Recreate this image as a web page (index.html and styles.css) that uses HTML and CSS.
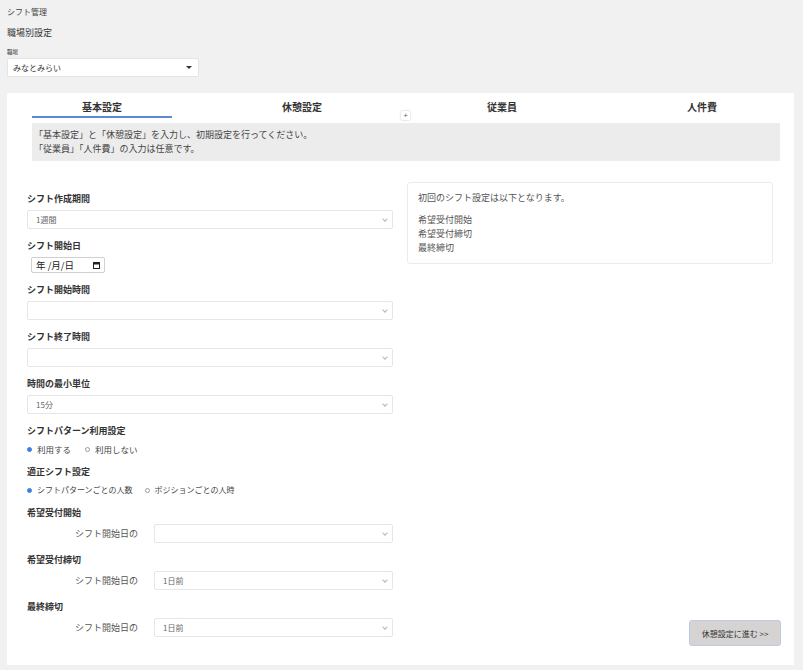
FILE: index.html
```html
<!DOCTYPE html>
<html lang="ja">
<head>
    <meta charset="UTF-8">
    <meta name="viewport" content="width=device-width, initial-scale=1.0">
    <title>職場別設定</title>
    <link rel="stylesheet" href="styles.css">
</head>
<body>

    <div id="pageHead">
        <div class="crumb">シフト管理</div>
        <h1 class="pageTitle">職場別設定</h1>
        <div class="siteLabel">職場</div>
        <div class="siteSelect">みなとみらい</div>
    </div>

    <div id="settingsCard">
        <div class="tabs">
            <div class="tab active">基本設定</div>
            <div class="tab">休憩設定</div>
            <div class="tab">従業員</div>
            <div class="tab">人件費</div>
        </div>
        <button class="tabAdd">+</button>

        <div class="notice">
            「基本設定」と「休憩設定」を入力し、初期設定を行ってください。<br>
            「従業員」「人件費」の入力は任意です。
        </div>

        <div class="content">
            <div class="settings">
                <div class="group">
                    <div class="groupLabel">シフト作成期間</div>
                    <div class="select">1週間</div>
                </div>

                <div class="group">
                    <div class="groupLabel">シフト開始日</div>
                    <div class="dateInput">
                        <span>年 /月/日</span>
                        <svg width="7" height="7" viewBox="0 0 7 7"><rect x="0.5" y="0.5" width="6" height="6" fill="none" stroke="#222"/><rect x="0.5" y="0.5" width="6" height="2" fill="#222"/></svg>
                    </div>
                </div>

                <div class="group">
                    <div class="groupLabel">シフト開始時間</div>
                    <div class="select"></div>
                </div>

                <div class="group">
                    <div class="groupLabel">シフト終了時間</div>
                    <div class="select"></div>
                </div>

                <div class="group">
                    <div class="groupLabel">時間の最小単位</div>
                    <div class="select">15分</div>
                </div>

                <div class="group radioGroup">
                    <div class="groupLabel">シフトパターン利用設定</div>
                    <div class="radios">
                        <label class="radio"><span class="dot on"></span>利用する</label>
                        <label class="radio"><span class="dot"></span>利用しない</label>
                    </div>
                </div>

                <div class="group radioGroup">
                    <div class="groupLabel">適正シフト設定</div>
                    <div class="radios narrow">
                        <label class="radio"><span class="dot on"></span>シフトパターンごとの人数</label>
                        <label class="radio"><span class="dot"></span>ポジションごとの人時</label>
                    </div>
                </div>

                <div class="group">
                    <div class="groupLabel">希望受付開始</div>
                    <div class="deadlineRow">
                        <span class="rowLabel">シフト開始日の</span>
                        <div class="select"></div>
                    </div>
                </div>

                <div class="group">
                    <div class="groupLabel">希望受付締切</div>
                    <div class="deadlineRow">
                        <span class="rowLabel">シフト開始日の</span>
                        <div class="select">1日前</div>
                    </div>
                </div>

                <div class="group">
                    <div class="groupLabel">最終締切</div>
                    <div class="deadlineRow">
                        <span class="rowLabel">シフト開始日の</span>
                        <div class="select">1日前</div>
                    </div>
                </div>
            </div>

            <div class="summaryCol">
                <div class="summary">
                    <p>初回のシフト設定は以下となります。</p>
                    希望受付開始<br>
                    希望受付締切<br>
                    最終締切
                </div>
                <button class="nextButton">休憩設定に進む &gt;&gt;</button>
            </div>
        </div>
    </div>

</body>
</html>
```

FILE: styles.css
```css
body {
    margin: 0;
    padding: 5px 9px 6px 7px;
    background-color: #f1f1f1;
    font-family: "Noto Sans CJK JP", "Noto Sans", sans-serif;
    color: #333;
}

.crumb {
    font-size: 8px;
    line-height: 14px;
    color: #444;
}

.pageTitle {
    margin: 7px 0 0;
    font-size: 9px;
    font-weight: normal;
    line-height: 14px;
}

.siteLabel {
    margin-top: 8px;
    font-size: 5.5px;
    line-height: 8px;
}

.siteSelect {
    position: relative;
    margin-top: 2px;
    width: 192px;
    height: 19px;
    box-sizing: border-box;
    padding-left: 5px;
    background-color: #fff;
    border: 1px solid #e4e4e4;
    border-radius: 2px;
    font-size: 8px;
    line-height: 17px;
}

.siteSelect::after {
    content: "";
    position: absolute;
    right: 6px;
    top: 7px;
    border-left: 3px solid transparent;
    border-right: 3px solid transparent;
    border-top: 3px solid #333;
}

#settingsCard {
    position: relative;
    margin-top: 16px;
    background-color: #fff;
}

.tabs {
    display: grid;
    grid-template-columns: repeat(4, 140px);
    column-gap: 60px;
    padding-left: 25px;
}

.tab {
    padding: 7px 0 2px;
    text-align: center;
    font-size: 10px;
    font-weight: bold;
    line-height: 14px;
    border-bottom: 2px solid transparent;
}

.tab.active {
    border-bottom-color: #5a8ad6;
}

.tabAdd {
    position: absolute;
    left: 394px;
    top: 18px;
    width: 9px;
    height: 9px;
    padding: 0;
    border: none;
    border-radius: 1px;
    background-color: #fff;
    box-shadow: 0 0 2px rgba(0, 0, 0, 0.3);
    font-family: "Liberation Sans", sans-serif;
    font-size: 8px;
    line-height: 9px;
    color: #666;
}

.notice {
    margin: 5px 14px 0 25px;
    padding: 5px 2px;
    background-color: #edeced;
    font-size: 9px;
    line-height: 14px;
    color: #444;
}

.content {
    display: flex;
    gap: 14px;
    padding: 21px 21px 28px 20px;
}

.settings {
    width: 366px;
    padding-top: 10px;
}

.group {
    margin-bottom: 10px;
}

.group:last-child {
    margin-bottom: 0;
}

.radioGroup {
    margin-bottom: 9px;
}

.groupLabel {
    margin-bottom: 4px;
    font-size: 9px;
    font-weight: bold;
    line-height: 14px;
}

.select {
    position: relative;
    flex: 1;
    height: 19px;
    box-sizing: border-box;
    padding-left: 8px;
    border: 1px solid #e6e6e6;
    border-radius: 2px;
    font-size: 8px;
    line-height: 17px;
    color: #666;
}

.select::after {
    content: "";
    position: absolute;
    right: 5px;
    top: 6px;
    width: 3px;
    height: 3px;
    border-right: 1px solid #b5b5b5;
    border-bottom: 1px solid #b5b5b5;
    transform: rotate(45deg);
}

.dateInput {
    display: flex;
    align-items: center;
    justify-content: space-between;
    margin-left: 4px;
    width: 74px;
    height: 16px;
    box-sizing: border-box;
    padding: 0 4px;
    border: 1px solid #d0d0d0;
    border-radius: 2px;
    font-size: 9.5px;
    color: #222;
}

.radios {
    display: flex;
    gap: 14px;
    font-size: 8.5px;
    line-height: 14px;
    color: #444;
}

.radios.narrow {
    gap: 12px;
    font-size: 8px;
}

.radio {
    display: flex;
    align-items: center;
}

.dot {
    width: 5px;
    height: 5px;
    margin-right: 5px;
    box-sizing: border-box;
    border: 1px solid #999;
    border-radius: 50%;
    background-color: #fff;
}

.dot.on {
    border-color: #3d7fe6;
    background-color: #3d7fe6;
}

.deadlineRow {
    display: flex;
    align-items: center;
}

.rowLabel {
    width: 111px;
    padding-right: 16px;
    text-align: right;
    font-size: 9px;
    color: #555;
}

.summaryCol {
    width: 366px;
    display: flex;
    flex-direction: column;
    justify-content: space-between;
}

.summary {
    padding: 8px 10px;
    border: 1px solid #ebebeb;
    border-radius: 3px;
    font-size: 9px;
    line-height: 14px;
    color: #555;
}

.summary p {
    margin: 0 0 8px;
}

.nextButton {
    align-self: flex-end;
    margin: 0 -8px -9px 0;
    width: 92px;
    height: 26px;
    padding: 0;
    background-color: #d5d4d3;
    border: 1px solid #bccae2;
    border-radius: 3px;
    font-family: "Noto Sans CJK JP", "Noto Sans", sans-serif;
    font-size: 8px;
    color: #333;
}
```
